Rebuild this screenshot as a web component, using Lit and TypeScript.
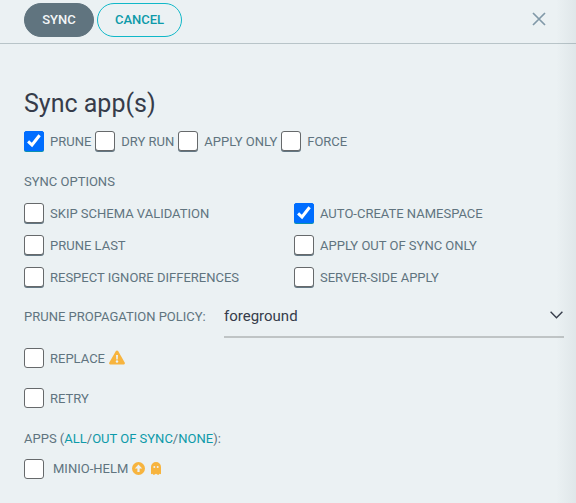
import { LitElement, html, css } from "lit";
import { customElement, property, state } from "lit/decorators.js";
import { classMap } from "lit/directives/class-map.js";

@customElement("check-field")
class CheckField extends LitElement {
  static styles = css`
    :host { display: flex; align-items: center; height: 20px; white-space: nowrap; cursor: pointer; }
    .box {
      box-sizing: border-box; flex: none; width: 20px; height: 20px; margin-right: 6px;
      background: #fff; border: 1px solid #66696b; border-radius: 3px;
      display: flex; align-items: center; justify-content: center;
    }
    .deep { box-shadow: 0 1px 0 #637783; }
    .on { background: #006dff; border-color: #006dff; border-radius: 2px; }
    .on.deep { box-shadow: 0 1px 0 #0c90b0; }
    svg { display: block; width: 20px; height: 20px; flex: none; }
    path { fill: none; stroke: #fff; stroke-width: 3; }
    .label { display: flex; align-items: center; padding-top: 2px; }
    .gap { margin-right: 9px; }
    .gap + .label { padding-top: 0; }
  `;
  @property({ type: Boolean }) checked = false;
  @property({ type: Boolean }) flat = false;
  @property({ type: Boolean }) wide = false;

  render() {
    const cls = { box: true, on: this.checked, deep: !this.flat, gap: this.wide };
    return html`<span class=${classMap(cls)} @click=${() => (this.checked = !this.checked)}
      >${this.checked ? html`<svg viewBox="0 0 20 20"><path d="M4.1 10.3 8 14 15.6 4.3" /></svg>` : ""}</span
      ><span class="label"><slot></slot></span>`;
  }
}

@customElement("app-root")
class AppRoot extends LitElement {
  static styles = css`
    :host {
      display: block; position: relative; box-sizing: border-box; width: 576px; height: 503px; overflow: hidden;
      background: #ebf1f3; color: #60747f; font: 13px/20px Roboto, "Liberation Sans", sans-serif;
    }
    .edge {
      position: absolute; top: 0; right: 0; bottom: 0; width: 20px; pointer-events: none;
      background: linear-gradient(to right, rgba(90, 110, 120, 0), rgba(90, 110, 120, 0.08));
    }
    header {
      box-sizing: border-box; height: 44px; padding: 3px 30px 0 24px; border-bottom: 1px solid #b8c4c8;
      display: flex; align-items: flex-start; gap: 3px;
    }
    button {
      box-sizing: border-box; height: 34px; padding: 0; border-radius: 17px; border: 1px solid #60747f;
      font: 500 13px/32px Roboto, "Liberation Sans", sans-serif; white-space: nowrap;
    }
    .sync { width: 70px; background: #60747f; color: #f4f7f8; }
    .cancel { width: 85px; background: transparent; border-color: #10b8c8; color: #0d9aa9; }
    .close { width: 14px; height: 14px; margin: 9px 0 0 auto; }
    .close path { fill: none; stroke: #8199a8; stroke-width: 1.7; }
    main { padding: 40px 12px 0 24px; }
    h1 { margin: 0; height: 40px; font-size: 25px; line-height: 40px; font-weight: 400; color: #363c4a; white-space: nowrap; }
    .flags { display: flex; gap: 4px; margin-top: 7px; }
    .caption { margin-top: 21px; white-space: nowrap; }
    .options { display: grid; grid-template-columns: 270px 1fr; row-gap: 12px; margin-top: 11px; }
    .policy { display: flex; margin-top: 11px; height: 40px; }
    .policy-name { width: 200px; flex: none; line-height: 37px; white-space: nowrap; }
    .select {
      flex: 1; display: flex; justify-content: space-between; box-sizing: border-box; height: 40px;
      border-bottom: 2px solid #bfc4c5; color: #363c4a; font-size: 15px; line-height: 36px;
    }
    .chevron { width: 13px; height: 8px; margin: 13px 1px 0 0; }
    .chevron path { fill: none; stroke: #363c4a; stroke-width: 1.4; }
    .replace { margin-top: 10px; }
    .retry { margin-top: 20px; }
    .apps { margin-top: 21px; white-space: nowrap; }
    .apps a { color: #0d9aa9; }
    .app { margin-top: 10px; }
    .warn { width: 16px; height: 15px; margin-left: 4px; margin-top: -3px; }
    .arrow { width: 13px; height: 13px; margin-left: 4px; margin-top: -1px; }
    .ghost { width: 10px; height: 13px; margin-left: 6px; margin-top: -1px; }
    .amber { fill: #f7b43e; }
    .hole { fill: #ebf1f3; }
  `;

  @state() private policy = "foreground";
  private options: [string, boolean][] = [
    ["SKIP SCHEMA VALIDATION", false],
    ["AUTO-CREATE NAMESPACE", true],
    ["PRUNE LAST", false],
    ["APPLY OUT OF SYNC ONLY", false],
    ["RESPECT IGNORE DIFFERENCES", false],
    ["SERVER-SIDE APPLY", false],
  ];

  render() {
    return html`
      <header>
        <button class="sync">SYNC</button>
        <button class="cancel">CANCEL</button>
        <svg class="close" viewBox="0 0 14 14"><path d="M1 1 13 13M13 1 1 13" /></svg>
      </header>
      <main>
        <h1>Sync app(s)</h1>
        <div class="flags">
          <check-field checked>PRUNE</check-field>
          <check-field>DRY RUN</check-field>
          <check-field>APPLY ONLY</check-field>
          <check-field>FORCE</check-field>
        </div>
        <div class="caption">SYNC OPTIONS</div>
        <div class="options">
          ${this.options.map(([label, on]) => html`<check-field ?checked=${on}>${label}</check-field>`)}
        </div>
        <div class="policy">
          <span class="policy-name">PRUNE PROPAGATION POLICY:</span>
          <div class="select">
            <span>${this.policy}</span>
            <svg class="chevron" viewBox="0 0 13 8"><path d="M.6 .8 6.500 6.800 12.400 .8" /></svg>
          </div>
        </div>
        <check-field class="replace" flat>REPLACE
          <svg class="warn" viewBox="0 0 16 15">
            <path class="amber" d="M6.9 1.1a1.3 1.3 0 0 1 2.2 0l6.6 11.5c.5.9-.1 1.9-1.1 1.9H1.4c-1 0-1.6-1-1.1-1.9z" />
            <path class="hole" d="M7 5h2l-.3 4.500H7.300z" />
            <circle class="hole" cx="8" cy="11.500" r="1.200" />
          </svg>
        </check-field>
        <check-field class="retry" flat>RETRY</check-field>
        <div class="apps">APPS (<a>ALL</a>/<a>OUT OF SYNC</a>/<a>NONE</a>):</div>
        <check-field class="app" flat wide>MINIO-HELM
          <svg class="arrow" viewBox="0 0 13 13">
            <circle class="amber" cx="6.500" cy="6.500" r="6.500" />
            <path class="hole" d="M6.500 2.500 10.200 6.400H7.600V10H5.400V6.400H2.800z" />
          </svg>
          <svg class="ghost" viewBox="0 0 10 13">
            <path class="amber" d="M0 5a5 5 0 0 1 10 0v7.300L8.700 11.700 7.200 13 5 11.700 2.800 13 1.300 11.700 0 12.300z" />
            <circle class="hole" cx="3.300" cy="4.900" r="1" />
            <circle class="hole" cx="6.700" cy="4.900" r="1" />
          </svg>
        </check-field>
      </main>
      <div class="edge"></div>
    `;
  }
}
